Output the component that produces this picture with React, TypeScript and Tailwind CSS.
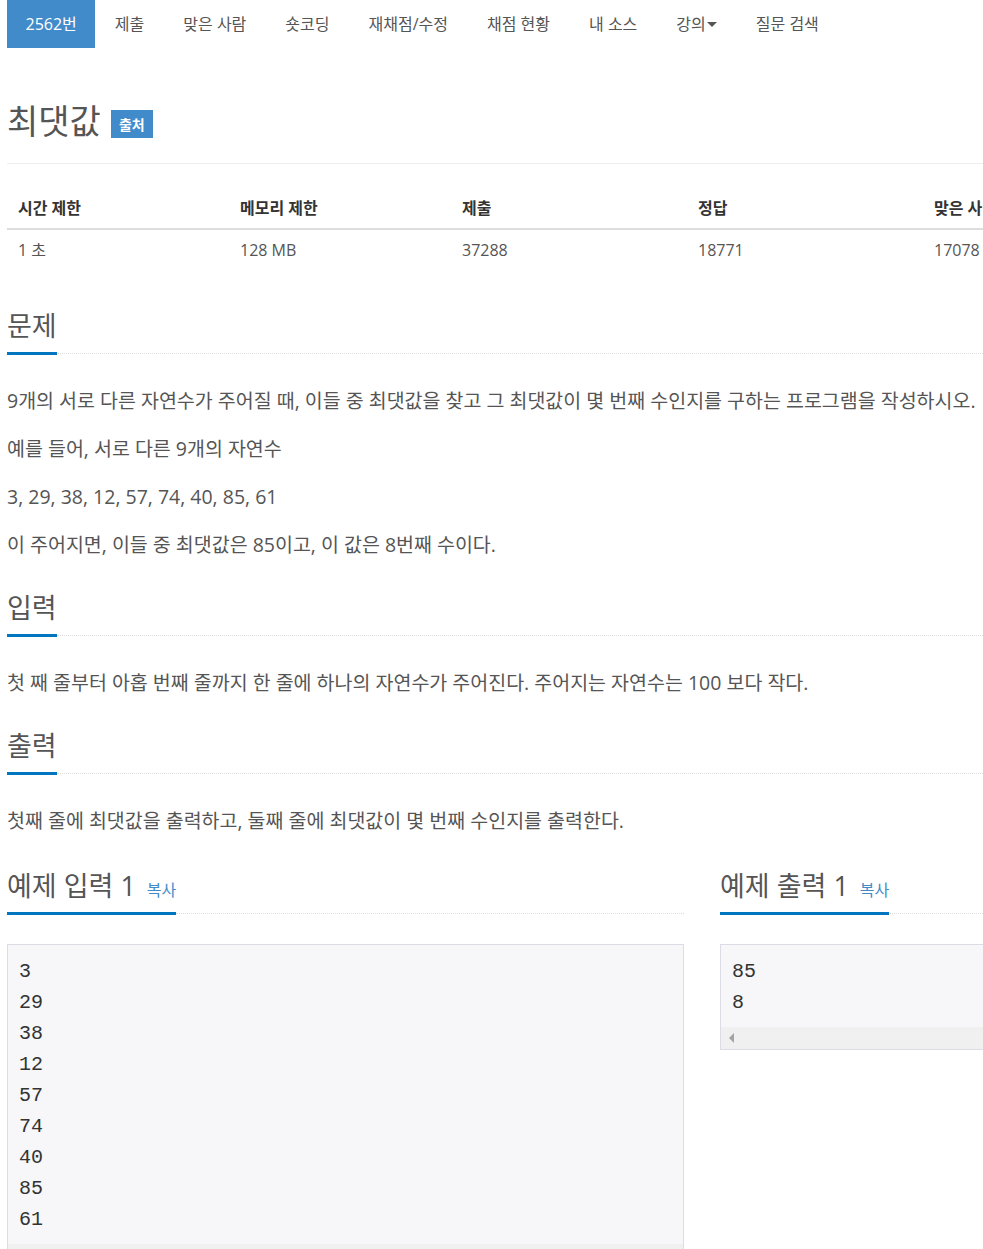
import React from "react";

const FONT = { fontFamily: "'Open Sans', 'Noto Sans CJK KR', sans-serif" };
const MONO = { fontFamily: "'Liberation Mono', 'DejaVu Sans Mono', monospace" };

function Heading({ children, extra }: { children: React.ReactNode; extra?: React.ReactNode }) {
  return (
    <div className="flex items-end">
      <div className="border-b-[3px] border-[#0076c0] pb-[11px] leading-[30px] text-[27px] text-[#555] whitespace-nowrap">
        {children}
        {extra}
      </div>
      <div className="flex-1 border-b border-dotted border-[#ddd] mb-[1px]" />
    </div>
  );
}

function Pre({ lines }: { lines: string[] }) {
  return (
    <div className="border border-[#dcdce6] bg-[#f7f7f9]">
      <div className="pt-[11px] pb-[9px] px-[11px] text-[20px] leading-[31px] text-[#333]" style={MONO}>
        {lines.map((l, i) => (
          <div key={i}>{l}</div>
        ))}
      </div>
      <div className="h-[22px] bg-[#f0f0f0] flex items-center pl-[7px]">
        <svg width="8" height="10" viewBox="0 0 8 10">
          <polygon points="6,0 6,10 1,5" fill="#a3a3a3" />
        </svg>
      </div>
    </div>
  );
}

function Para({ children }: { children: React.ReactNode }) {
  return <p className="mb-[18px] whitespace-nowrap">{children}</p>;
}

export default function App() {
  const navItems = ["제출", "맞은 사람", "숏코딩", "재채점/수정", "채점 현황", "내 소스"];
  const cols = [
    { h: "시간 제한", v: "1 초", w: 222 },
    { h: "메모리 제한", v: "128 MB", w: 222 },
    { h: "제출", v: "37288", w: 236 },
    { h: "정답", v: "18771", w: 236 },
    { h: "맞은 사람", v: "17078", w: 236 },
    { h: "정답 비율", v: "50.123%", w: 236 },
  ];
  const textCls = "mt-[31px] flex flex-col text-[19.5px] leading-[30px] text-[#555]";
  return (
    <div className="w-[983px] h-[1249px] overflow-hidden bg-white" style={FONT}>
      <div className="w-[1420px] pl-[7px] flex flex-col">
        {/* nav */}
        <div className="flex h-[48px] items-stretch text-[16px] text-[#555]">
          <div className="flex items-center px-[18.5px] bg-[#428bca] text-white">2562번</div>
          {navItems.map((n) => (
            <div key={n} className="flex items-center px-[19.5px] whitespace-nowrap">
              {n}
            </div>
          ))}
          <div className="flex items-center px-[19.5px] whitespace-nowrap">
            강의
            <svg width="10" height="6" viewBox="0 0 10 6" className="ml-[1px] mt-[2px]">
              <polygon points="0,0 10,0 5,5" fill="#555" />
            </svg>
          </div>
          <div className="flex items-center px-[19.5px] whitespace-nowrap">질문 검색</div>
        </div>

        {/* title */}
        <div className="mt-[54px] flex items-center pb-[23px] border-b border-[#eee] w-[1406px]">
          <span className="text-[34px] leading-[38px] text-[#555]">최댓값</span>
          <span className="ml-[10px] mt-[6px] inline-flex items-center justify-center w-[42px] h-[28px] bg-[#428bca] text-white text-[14px] font-bold">
            출처
          </span>
        </div>

        {/* table */}
        <div className="mt-[26px] text-[16px] leading-[21px]">
          <div className="flex border-b-2 border-[#ddd]">
            {cols.map((c) => (
              <div key={c.h} className="shrink-0 px-[11px] pt-[8px] pb-[9px] font-bold text-[#333] whitespace-nowrap" style={{ width: c.w }}>
                {c.h}
              </div>
            ))}
          </div>
          <div className="flex">
            {cols.map((c) => (
              <div key={c.h} className="shrink-0 px-[11px] pt-[10px] pb-[8px] text-[#555] whitespace-nowrap" style={{ width: c.w }}>
                {c.v}
              </div>
            ))}
          </div>
        </div>

        <div className="w-[1406px] flex flex-col">
          {/* 문제 */}
          <div className="mt-[42px]">
            <Heading>문제</Heading>
          </div>
          <div className={textCls}>
            <Para>
              9개의 서로 다른 자연수가 주어질 때, 이들 중 최댓값을 찾고 그 최댓값이 몇 번째 수인지를 구하는 프로그램을 작성하시오.
            </Para>
            <Para>예를 들어, 서로 다른 9개의 자연수</Para>
            <Para>3, 29, 38, 12, 57, 74, 40, 85, 61</Para>
            <Para>이 주어지면, 이들 중 최댓값은 85이고, 이 값은 8번째 수이다.</Para>
          </div>

          {/* 입력 */}
          <div className="mt-[15px]">
            <Heading>입력</Heading>
          </div>
          <div className={textCls}>
            <Para>
              첫 째 줄부터 아홉 번째 줄까지 한 줄에 하나의 자연수가 주어진다. 주어지는 자연수는 100 보다 작다.
            </Para>
          </div>

          {/* 출력 */}
          <div className="mt-[15px]">
            <Heading>출력</Heading>
          </div>
          <div className={textCls}>
            <Para>첫째 줄에 최댓값을 출력하고, 둘째 줄에 최댓값이 몇 번째 수인지를 출력한다.</Para>
          </div>

          {/* samples */}
          <div className="mt-[17px] flex gap-[36px]">
            <div className="w-[677px] shrink-0">
              <Heading extra={<span className="ml-[11px] text-[16px] leading-none text-[#428bca]">복사</span>}>예제 입력 1</Heading>
              <div className="mt-[29px]">
                <Pre lines={["3", "29", "38", "12", "57", "74", "40", "85", "61"]} />
              </div>
            </div>
            <div className="w-[677px] shrink-0">
              <Heading extra={<span className="ml-[11px] text-[16px] leading-none text-[#428bca]">복사</span>}>예제 출력 1</Heading>
              <div className="mt-[29px]">
                <Pre lines={["85", "8"]} />
              </div>
            </div>
          </div>
        </div>
      </div>
    </div>
  );
}
